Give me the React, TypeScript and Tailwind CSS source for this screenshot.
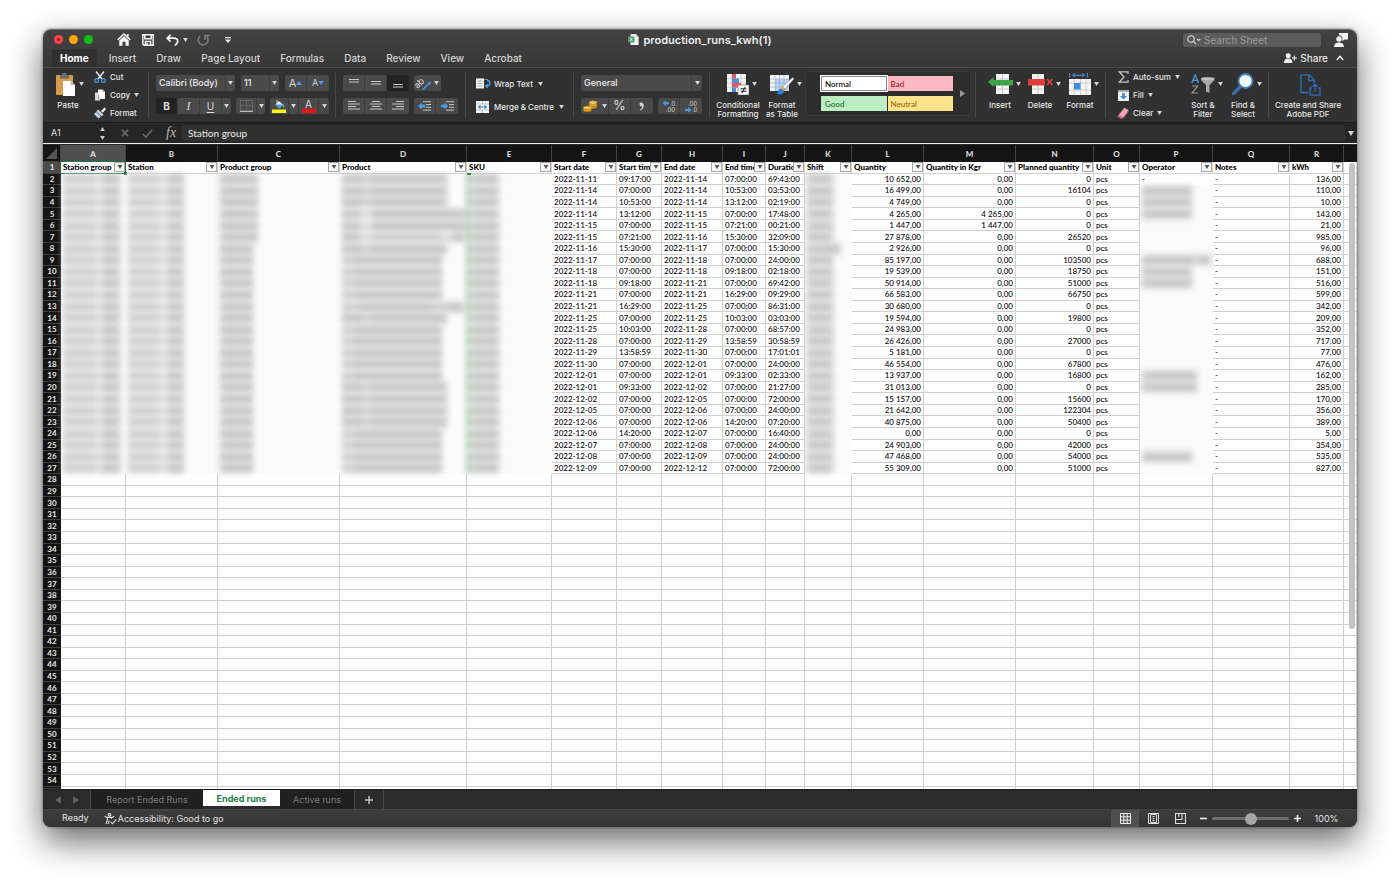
import React from "react";

type Run = [string, string, string, string, string, string, string, string, string];

const runs: Run[] = [
  ["2022-11-11", "09:17:00", "2022-11-14", "07:00:00", "69:43:00", "10 652,00", "0,00", "0", "136,00"],
  ["2022-11-14", "07:00:00", "2022-11-14", "10:53:00", "03:53:00", "16 499,00", "0,00", "16104", "110,00"],
  ["2022-11-14", "10:53:00", "2022-11-14", "13:12:00", "02:19:00", "4 749,00", "0,00", "0", "10,00"],
  ["2022-11-14", "13:12:00", "2022-11-15", "07:00:00", "17:48:00", "4 265,00", "4 265,00", "0", "143,00"],
  ["2022-11-15", "07:00:00", "2022-11-15", "07:21:00", "00:21:00", "1 447,00", "1 447,00", "0", "21,00"],
  ["2022-11-15", "07:21:00", "2022-11-16", "15:30:00", "32:09:00", "27 878,00", "0,00", "26520", "985,00"],
  ["2022-11-16", "15:30:00", "2022-11-17", "07:00:00", "15:30:00", "2 926,00", "0,00", "0", "96,00"],
  ["2022-11-17", "07:00:00", "2022-11-18", "07:00:00", "24:00:00", "85 197,00", "0,00", "103500", "688,00"],
  ["2022-11-18", "07:00:00", "2022-11-18", "09:18:00", "02:18:00", "19 539,00", "0,00", "18750", "151,00"],
  ["2022-11-18", "09:18:00", "2022-11-21", "07:00:00", "69:42:00", "50 914,00", "0,00", "51000", "516,00"],
  ["2022-11-21", "07:00:00", "2022-11-21", "16:29:00", "09:29:00", "66 583,00", "0,00", "66750", "599,00"],
  ["2022-11-21", "16:29:00", "2022-11-25", "07:00:00", "86:31:00", "30 680,00", "0,00", "0", "342,00"],
  ["2022-11-25", "07:00:00", "2022-11-25", "10:03:00", "03:03:00", "19 594,00", "0,00", "19800", "209,00"],
  ["2022-11-25", "10:03:00", "2022-11-28", "07:00:00", "68:57:00", "24 983,00", "0,00", "0", "352,00"],
  ["2022-11-28", "07:00:00", "2022-11-29", "13:58:59", "30:58:59", "26 426,00", "0,00", "27000", "717,00"],
  ["2022-11-29", "13:58:59", "2022-11-30", "07:00:00", "17:01:01", "5 181,00", "0,00", "0", "77,00"],
  ["2022-11-30", "07:00:00", "2022-12-01", "07:00:00", "24:00:00", "46 554,00", "0,00", "67800", "476,00"],
  ["2022-12-01", "07:00:00", "2022-12-01", "09:33:00", "02:33:00", "13 937,00", "0,00", "16800", "162,00"],
  ["2022-12-01", "09:33:00", "2022-12-02", "07:00:00", "21:27:00", "31 013,00", "0,00", "0", "285,00"],
  ["2022-12-02", "07:00:00", "2022-12-05", "07:00:00", "72:00:00", "15 157,00", "0,00", "15600", "170,00"],
  ["2022-12-05", "07:00:00", "2022-12-06", "07:00:00", "24:00:00", "21 642,00", "0,00", "122304", "356,00"],
  ["2022-12-06", "07:00:00", "2022-12-06", "14:20:00", "07:20:00", "40 875,00", "0,00", "50400", "389,00"],
  ["2022-12-06", "14:20:00", "2022-12-07", "07:00:00", "16:40:00", "0,00", "0,00", "0", "5,00"],
  ["2022-12-07", "07:00:00", "2022-12-08", "07:00:00", "24:00:00", "24 903,00", "0,00", "42000", "354,00"],
  ["2022-12-08", "07:00:00", "2022-12-09", "07:00:00", "24:00:00", "47 468,00", "0,00", "54000", "535,00"],
  ["2022-12-09", "07:00:00", "2022-12-12", "07:00:00", "72:00:00", "55 309,00", "0,00", "51000", "827,00"],
];

const columns: { id: string; title: string; width: string }[] = [
  { id: "A", title: "Station group", width: "w-[65px]" },
  { id: "B", title: "Station", width: "w-[92px]" },
  { id: "C", title: "Product group", width: "w-[122px]" },
  { id: "D", title: "Product", width: "w-[127px]" },
  { id: "E", title: "SKU", width: "w-[85px]" },
  { id: "F", title: "Start date", width: "w-[65px]" },
  { id: "G", title: "Start time", width: "w-[45px]" },
  { id: "H", title: "End date", width: "w-[61px]" },
  { id: "I", title: "End time", width: "w-[43px]" },
  { id: "J", title: "Duration", width: "w-[39px]" },
  { id: "K", title: "Shift", width: "w-[47px]" },
  { id: "L", title: "Quantity", width: "w-[72px]" },
  { id: "M", title: "Quantity in Kgr", width: "w-[92px]" },
  { id: "N", title: "Planned quantity", width: "w-[78px]" },
  { id: "O", title: "Unit", width: "w-[46px]" },
  { id: "P", title: "Operator", width: "w-[73px]" },
  { id: "Q", title: "Notes", width: "w-[77px]" },
  { id: "R", title: "kWh", width: "w-[54px]" },
];

const D = "bg-[#c6c6c6]";
const M = "bg-[#cfcfcf]";
const L = "bg-[#dedede]";

type Segment = [number, string];

function redacted(id: string, row: number): Segment[] {
  switch (id) {
    case "A":
      return [[32, M], [7, L], [18, D]];
    case "B":
      return [[30, M], [10, L], [16, D]];
    case "C":
      return row <= 7 ? [[38, D]] : [[33, D]];
    case "D":
      if (row === 5 || row === 6) return [[18, D], [12, L], [70, D], [24, D]];
      if (row === 7) return [[18, D], [12, L], [70, M], [10, L], [13, D]];
      if (row === 13) return [[18, M], [72, D], [18, M], [14, D]];
      if (row <= 8 || row === 14 || (row >= 20 && row <= 23)) return [[20, D], [9, M], [76, D]];
      return [[12, M], [88, D]];
    case "E":
      return [[27, D]];
    case "K":
      return row === 8 ? [[34, D]] : [[26, D]];
    case "P":
      if ([3, 4, 5, 10, 11, 26].includes(row)) return [[50, D]];
      if (row === 9) return [[52, D], [4, L], [13, D]];
      if (row === 19 || row === 20) return [[55, D]];
      return [];
    default:
      return [];
  }
}

function Caret({ className = "" }: { className?: string }) {
  return (
    <svg viewBox="0 0 6 5" className={`h-[4px] w-[5px] shrink-0 fill-[#d6d6d6] ${className}`}>
      <path d="M0 0h6L3 5z" />
    </svg>
  );
}

function Divider() {
  return <div className="my-1 w-px shrink-0 bg-[#484848]" />;
}

function HiddenCell({ id, row }: { id: string; row: number }) {
  const segs = redacted(id, row);
  return (
    <td className="bg-[#fbfbfb] p-0">
      <div className={`flex h-[10px] pl-[2px] blur-[3px] ${id === "E" ? "border-l-3 border-[#6fae73] pl-0" : ""}`}>
        {segs.map(([w, c], i) => (
          <span key={i} className={`block h-[10px] ${c}`} style={{ width: w }} />
        ))}
      </div>
    </td>
  );
}

const cellBase = "overflow-hidden whitespace-nowrap border-b border-r border-[#cfcfcf] px-[2px] py-0";

function Cell({ children, right }: { children?: React.ReactNode; right?: boolean }) {
  return <td className={`${cellBase} ${right ? "text-right" : "text-left"}`}>{children}</td>;
}

function RowHead({ n, active }: { n?: number; active?: boolean }) {
  return (
    <th
      scope="row"
      className={`border-b border-[#3f3f3f] p-0 text-center font-bold text-[#e8e8e8] ${active ? "bg-[#4c4c4c]" : "bg-[#141414]"}`}
    >
      {n}
    </th>
  );
}

function Sheet() {
  const blanks = Array.from({ length: 27 }, (_, i) => i + 28);
  return (
    <div className="relative min-h-0 flex-1 overflow-hidden bg-white">
      <table className="h-full w-full table-fixed border-separate border-spacing-0 font-['Lato','Open_Sans',sans-serif] text-[8px] leading-[10px] font-medium text-[#080808]">
        <colgroup>
          <col className="w-[18px]" />
          {columns.map((c) => (
            <col key={c.id} className={c.width} />
          ))}
          <col />
        </colgroup>
        <thead>
          <tr className="h-[17px]">
            <th className="border-r border-b border-[#444] bg-[#141414] p-0">
              <svg viewBox="0 0 17 16" className="block h-4 w-full">
                <path d="M14 3v11H3z" fill="#555" />
              </svg>
            </th>
            {columns.map((c) => (
              <th
                key={c.id}
                scope="col"
                className={`border-r border-[#444] p-0 text-center font-bold text-[#e8e8e8] ${c.id === "A" ? "bg-[#505050]" : "bg-[#141414]"}`}
              >
                {c.id}
              </th>
            ))}
            <th className="bg-[#141414]" />
          </tr>
        </thead>
        <tbody>
          <tr>
            <RowHead n={1} active />
            {columns.map((c) => (
              <td key={c.id} className="relative border-r border-b border-[#cfcfcf] p-0 font-black text-black">
                <div className="flex items-center">
                  <span className="min-w-0 flex-1 overflow-hidden pl-[2px] whitespace-nowrap">{c.title}</span>
                  <button
                    aria-label={`Filter ${c.title}`}
                    className="flex h-[10px] w-[11px] shrink-0 items-center justify-center border border-[#a9a9a9] bg-[#f6f6f6]"
                  >
                    <svg viewBox="0 0 6 5" className="h-[4px] w-[6px] fill-[#555]">
                      <path d="M0 0h6L3 5z" />
                    </svg>
                  </button>
                </div>
                {c.id === "A" && (
                  <div className="pointer-events-none absolute -inset-px border border-[#1d7044]">
                    <span className="absolute -right-[2px] -bottom-[2px] h-[3px] w-[3px] bg-[#1d7044]" />
                  </div>
                )}
                {c.id === "E" && <span className="absolute -bottom-[2px] left-0 h-[2px] w-[4px] bg-[#157a2a]" />}
              </td>
            ))}
            <Cell />
          </tr>
          {runs.map((r, i) => {
            const row = i + 2;
            return (
              <tr key={row}>
                <RowHead n={row} />
                {["A", "B", "C", "D", "E"].map((id) => (
                  <HiddenCell key={id} id={id} row={row} />
                ))}
                <Cell>{r[0]}</Cell>
                <Cell>{r[1]}</Cell>
                <Cell>{r[2]}</Cell>
                <Cell>{r[3]}</Cell>
                <Cell>{r[4]}</Cell>
                <HiddenCell id="K" row={row} />
                <Cell right>{r[5]}</Cell>
                <Cell right>{r[6]}</Cell>
                <Cell right>{r[7]}</Cell>
                <Cell>pcs</Cell>
                {row === 2 ? <td className="px-[2px] py-0">-</td> : <HiddenCell id="P" row={row} />}
                <Cell>-</Cell>
                <Cell right>{r[8]}</Cell>
                <Cell />
              </tr>
            );
          })}
          {blanks.map((n) => (
            <tr key={n}>
              <RowHead n={n} />
              {columns.map((c) => (
                <Cell key={c.id} />
              ))}
              <Cell />
            </tr>
          ))}
          <tr className="h-[2px]">
            <RowHead />
            {columns.map((c) => (
              <td key={c.id} className="border-r border-[#cfcfcf] p-0" />
            ))}
            <td className="p-0" />
          </tr>
        </tbody>
      </table>
      <div className="absolute top-[18px] right-[2px] h-[466px] w-[6px] rounded-full bg-[#c3c3c3]" />
    </div>
  );
}

function TitleBar() {
  return (
    <div className="relative flex h-[19px] shrink-0 items-center pl-[11px]">
      <div className="flex gap-[6px]">
        <button aria-label="Close" className="flex h-[9px] w-[9px] items-center justify-center rounded-full bg-[#f9464a]">
          <span className="h-[3px] w-[3px] rounded-full bg-[#8d1214]" />
        </button>
        <button aria-label="Minimise" className="h-[9px] w-[9px] rounded-full bg-[#fda509]" />
        <button aria-label="Zoom" className="h-[9px] w-[9px] rounded-full bg-[#0fc01b]" />
      </div>
      <div className="ml-[24px] flex items-center">
        <button aria-label="Home" className="w-[14px]">
          <svg viewBox="0 0 14 13" className="block h-[13px] w-[14px]" fill="#f4f4f4">
            <path d="M7 0 13.800 6.300l-1 1.200L7 2.200 1.200 7.500l-1-1.200z" />
            <path d="M10 1h1.700v3L10 2.600zM2.200 7.600 7 3.200l4.800 4.400V12.800H8.500V8.800h-3v4H2.200z" />
          </svg>
        </button>
        <button aria-label="Save" className="ml-[11px]">
          <svg viewBox="0 0 12 12" className="block h-3 w-3" fill="none" stroke="#f4f4f4" strokeWidth="1.500">
            <path d="M.8.8h10.400v10.400H2L.8 10z" />
            <path d="M2.800 1v3.800h6.400V1M3.400 11V7.600h5.200V11M5.200 9v2" />
          </svg>
        </button>
        <button aria-label="Undo" className="ml-[12px] flex items-center">
          <svg viewBox="0 0 13 12" className="h-3 w-[13px]" fill="none" stroke="#f4f4f4" strokeWidth="1.700">
            <path d="M4.600.8 1.200 4.200l3.400 3.400M1.400 4.200h6.200c5.400 0 5.200 5 1.200 7.200" />
          </svg>
          <Caret className="ml-[4px]" />
        </button>
        <button aria-label="Redo" className="ml-[9px]">
          <svg viewBox="0 0 13 12" className="h-3 w-[13px]" fill="none" stroke="#7c7c7c" strokeWidth="1.500">
            <path d="M3 2.200a4.900 4.900 0 1 0 6.800.4M8 6V1.600h4.400" />
          </svg>
        </button>
        <button aria-label="Customise toolbar" className="ml-[15px]">
          <svg viewBox="0 0 6 6" className="h-[6px] w-[6px]" fill="#eee">
            <path d="M0 0h6v1.200H0zM0 2.600h6L3 6z" />
          </svg>
        </button>
      </div>
      <div className="pointer-events-none absolute inset-0 flex items-center justify-center gap-[4px]">
        <svg viewBox="0 0 11 11" className="h-[11px] w-[11px]">
          <path d="M2.500 0h5.300L10.600 3v8H2.500z" fill="#f2f5f3" />
          <path d="M7.800 0 10.600 3H7.800z" fill="#b9c9c0" />
          <path d="M0 2.400h6.400v6.200H0z" fill="#4f9c74" />
          <path d="m2 4 2.400 3M4.400 4 2 7" stroke="#e4f3ea" strokeWidth=".9" />
        </svg>
        <h1 className="text-[11px] leading-4 font-semibold text-[#ececec]">production_runs_kwh(1)</h1>
      </div>
      <div className="relative ml-auto flex items-center gap-[13px] pr-[9px]">
        <label className="flex h-[14px] w-[138px] items-center rounded-[2px] bg-[#5b5b5b] pl-[4px]">
          <svg viewBox="0 0 14 10" className="h-[10px] w-[14px] shrink-0" fill="none" stroke="#dcdcdc" strokeWidth="1.100">
            <circle cx="4" cy="4" r="3.200" />
            <path d="m6.400 6.400 2.800 2.800M10 3.800l1.700 1.600 1.700-1.600" />
          </svg>
          <input
            aria-label="Search Sheet"
            placeholder="Search Sheet"
            className="ml-[3px] w-0 min-w-0 flex-1 bg-transparent text-[10px] leading-[14px] text-white outline-none placeholder:text-[#9b9b9b]"
          />
        </label>
        <button aria-label="Feedback">
          <svg viewBox="0 0 14 14" className="block h-[14px] w-[14px]" fill="#f5f5f5">
            <path d="M5 0h9v6.400h-3.400L8.400 8.200V6.600A3.400 3.400 0 0 0 5 2.200z" />
            <circle cx="5" cy="6" r="2.700" />
            <path d="M0 14c.2-3.200 2-4.600 5-4.600s4.800 1.400 5 4.600z" />
          </svg>
        </button>
      </div>
    </div>
  );
}

function MenuTabs() {
  const items = ["Insert", "Draw", "Page Layout", "Formulas", "Data", "Review", "View", "Acrobat"];
  return (
    <nav className="flex h-[18px] shrink-0 items-stretch gap-1 pl-[9px] text-[10px] leading-[17px] font-medium text-[#d4d4d4]">
      <button className="rounded-t-[2px] bg-[#313131] px-2 font-bold text-white">Home</button>
      {items.map((t) => (
        <button key={t} className="px-2">
          {t}
        </button>
      ))}
      <div className="ml-auto flex items-center gap-[8px] pr-[13px] text-[10px]">
        <button className="flex items-center gap-[3px] text-[#e6e6e6]">
          <svg viewBox="0 0 13 10" className="h-[10px] w-[13px]" fill="#efefef">
            <circle cx="4.200" cy="2.800" r="2.500" />
            <path d="M0 10c.1-3.200 1.400-4.400 4.200-4.400S8.300 6.800 8.400 10z" />
            <path d="M9.800 2.400h1.200v2h2v1.200h-2v2H9.800v-2h-2V4.400h2z" />
          </svg>
          Share
        </button>
        <button aria-label="Collapse ribbon">
          <svg viewBox="0 0 8 6" className="h-[6px] w-[8px]" fill="none" stroke="#ececec" strokeWidth="1.500">
            <path d="m.8 5 3.200-3.600L7.200 5" />
          </svg>
        </button>
      </div>
    </nav>
  );
}

const box = "flex h-4 items-stretch overflow-hidden rounded-[2px] bg-[#4a4a4a]";
const seg = "flex items-center justify-center border-r border-[#3c3c3c] last:border-r-0";

function Picker({ label, value, className, caret }: { label: string; value: string; className: string; caret: string }) {
  return (
    <div className={`${box} relative ${className}`}>
      <select
        aria-label={label}
        className="w-full appearance-none bg-transparent pl-[3px] text-[9px] leading-4 font-medium text-[#ededed] outline-none"
      >
        <option>{value}</option>
      </select>
      <span className={`pointer-events-none absolute inset-y-0 right-0 flex items-center justify-center border-l border-[#3c3c3c] ${caret}`}>
        <Caret />
      </span>
    </div>
  );
}

function Lines({ rows, y = 0 }: { rows: [number, number][]; y?: number }) {
  return (
    <svg viewBox="0 0 12 12" className="h-3 w-3" stroke="#c9c9c9" strokeWidth="1">
      {rows.map(([a, b], i) => (
        <path key={i} d={`M${a} ${y + 1.5 + i * 2.5}H${b}`} />
      ))}
    </svg>
  );
}

function Indent() {
  return (
    <svg viewBox="0 0 13 10" className="h-[10px] w-[13px]">
      <path d="M5 .7h8M8 3.500h5M8 6.300h5M5 9.100h8" stroke="#c9c9c9" strokeWidth="1" />
      <path d="M0 5 3.800 1.400v2.100h3.400v3H3.800v2.100z" fill="#4c9be8" />
    </svg>
  );
}

function BigButton({ lines, icon, caret = true, className }: { lines: string[]; icon: React.ReactNode; caret?: boolean; className: string }) {
  return (
    <button className={`flex shrink-0 flex-col items-center text-[8px] leading-[9px] font-medium text-[#e6e6e6] ${className}`}>
      <span className={`flex h-[26px] items-center gap-[3px] ${caret ? "pl-2" : ""}`}>
        {icon}
        {caret && <Caret />}
      </span>
      <span className="mt-[4px] block whitespace-nowrap">
        {lines.map((l) => (
          <span key={l} className="block">
            {l}
          </span>
        ))}
      </span>
    </button>
  );
}

function SmallButton({ text, icon, caret }: { text: string; icon: React.ReactNode; caret?: boolean }) {
  return (
    <button className="flex h-[14px] items-center gap-[4px] text-[8px] leading-[14px] font-medium whitespace-nowrap text-[#e6e6e6]">
      <span className="flex w-3 justify-center">{icon}</span>
      {text}
      {caret && <Caret />}
    </button>
  );
}

function Ribbon() {
  return (
    <div className="flex h-[55px] shrink-0 items-stretch overflow-hidden border-t border-[#4b4b4b] bg-[#313131]">
      <div className="flex w-[105px] shrink-0 pt-[2px] pl-[11px]">
        <BigButton
          className="w-[28px] pt-px"
          lines={["Paste"]}
          icon={
            <svg viewBox="0 0 20 23" className="-ml-1 h-[23px] w-[20px] shrink-0">
              <rect x="0" y="2" width="17" height="20" rx="1" fill="#d79b4e" />
              <path d="M4 2h2a2.500 2.500 0 0 1 5 0h2v3.500H4z" fill="#6d6d6d" />
              <path d="M7 8h7.500L19 12v11H7z" fill="#fff" />
              <path d="M14.500 8v4H19z" fill="#bdbdbd" />
            </svg>
          }
        />
        <div className="ml-[12px] flex flex-col gap-[4px]">
          <SmallButton
            text="Cut"
            icon={
              <svg viewBox="0 0 12 12" className="h-3 w-3 shrink-0" fill="none">
                <path d="M2 .5 8 8M10 .5 4 8" stroke="#eee" strokeWidth="1.400" />
                <circle cx="2.600" cy="9.500" r="1.900" stroke="#4c9be8" strokeWidth="1.200" />
                <circle cx="9.400" cy="9.500" r="1.900" stroke="#4c9be8" strokeWidth="1.200" />
              </svg>
            }
          />
          <SmallButton
            text="Copy"
            caret
            icon={
              <svg viewBox="0 0 12 12" className="h-3 w-3 shrink-0">
                <path d="M1 3.500h5v8H1z" fill="#d7d7d7" />
                <path d="M4 .5h4.500L11 3v7H4z" fill="#fff" />
                <path d="M8.500.5V3H11zM4 4v6H6" fill="#aaa" />
              </svg>
            }
          />
          <SmallButton
            text="Format"
            icon={
              <svg viewBox="0 0 12 12" className="h-3 w-3 shrink-0">
                <path d="m7 4 3.500-3.500 1.500 1.500L8.800 5.800z" fill="#f2f2f2" />
                <path d="m4 2.500 5.500 5L7.800 9.300 2.500 4.200z" fill="#d4d4d4" />
                <path d="M2.600 4.600 7.200 9 4.500 11.800 0 7z" fill="#8bbdec" />
                <path d="M1 6.500 5.500 10.500" stroke="#fff" />
              </svg>
            }
          />
        </div>
      </div>
      <Divider />

      <div className="flex w-[186px] shrink-0 flex-col gap-[7px] pt-[7px] pl-[7px]">
        <div className="flex gap-[6px]">
          <Picker label="Font" value="Calibri (Body)" className="w-[79px]" caret="w-[10px]" />
          <Picker label="Font size" value="11" className="w-[38px]" caret="w-[10px]" />
          <div className={`${box} w-[44px] text-[#d8d8d8]`}>
            <button aria-label="Increase font size" className={`${seg} w-[22px] text-[11px]`}>
              A
              <svg viewBox="0 0 6 4" className="h-[4px] w-[6px] fill-[#4c9be8]">
                <path d="M0 4h6L3 0z" />
              </svg>
            </button>
            <button aria-label="Decrease font size" className={`${seg} w-[22px] text-[9px]`}>
              A
              <svg viewBox="0 0 6 4" className="h-[4px] w-[6px] fill-[#4c9be8]">
                <path d="M0 0h6L3 4z" />
              </svg>
            </button>
          </div>
        </div>
        <div className="flex gap-[5px] text-[10px] text-[#dedede]">
          <div className={`${box} w-[75px]`}>
            <button className={`${seg} w-[22px] bg-[#232323] font-bold`}>B</button>
            <button className={`${seg} w-[22px] font-['Liberation_Serif',serif] text-[12px] italic`}>I</button>
            <button className={`${seg} w-[22px] underline underline-offset-2`}>U</button>
            <button aria-label="Underline options" className={`${seg} flex-1`}>
              <Caret />
            </button>
          </div>
          <div className={`${box} w-[29px]`}>
            <button aria-label="Borders" className={`${seg} w-[21px]`}>
              <svg viewBox="0 0 13 12" className="h-3 w-[13px]" fill="none" stroke="#8d8d8d" strokeWidth=".8">
                <path d="M.5.500h12v10.500M.5.500V11M6.500.500V11M.5 5.500h12" strokeDasharray="1 1" />
                <path d="M0 11.300h13" stroke="#d5d5d5" strokeWidth="1" />
              </svg>
            </button>
            <button aria-label="Border options" className={`${seg} flex-1`}>
              <Caret />
            </button>
          </div>
          <div className={`${box} w-[59px]`}>
            <button aria-label="Fill colour" className={`${seg} w-[19px]`}>
              <svg viewBox="0 0 14 14" className="h-[14px] w-[14px]">
                <path d="M3.500 5.500 7 2l4 3.800L7.300 9.200z" fill="#f0f0f0" />
                <path d="M5 1v4" stroke="#ccc" />
                <path d="M11 4.500c1.800 1.500 1.800 3.500.8 4.500-1-.6-1-2.600-.8-4.500zM3.500 5.500h7.300L7.300 9.200z" fill="#4c9be8" />
                <path d="M0 10.400h14V14H0z" fill="#f7f312" />
              </svg>
            </button>
            <button aria-label="Fill colour options" className={`${seg} w-[10px]`}>
              <Caret />
            </button>
            <button aria-label="Font colour" className={`${seg} w-[20px] flex-col`}>
              <span className="text-[10px] leading-[10px]">A</span>
              <span className="h-[4px] w-[14px] bg-[#ee1111]" />
            </button>
            <button aria-label="Font colour options" className={`${seg} flex-1`}>
              <Caret />
            </button>
          </div>
        </div>
      </div>
      <Divider />

      <div className="flex w-[129px] shrink-0 flex-col gap-[7px] pt-[7px] pl-[7px]">
        <div className="flex gap-[5px]">
          <div className={`${box} w-[66px]`}>
            <button aria-label="Align top" className={`${seg} w-[22px]`}>
              <Lines rows={[[1, 11], [1, 11]]} y={1} />
            </button>
            <button aria-label="Align middle" className={`${seg} w-[22px]`}>
              <Lines rows={[[1, 11], [1, 11]]} y={3} />
            </button>
            <button aria-label="Align bottom" className={`${seg} w-[22px] bg-[#232323]`}>
              <Lines rows={[[1, 11], [1, 11]]} y={6} />
            </button>
          </div>
          <button aria-label="Orientation" className="flex h-4 w-[27px] items-center justify-center gap-[2px] rounded-[2px] bg-[#4a4a4a]">
            <svg viewBox="0 0 15 15" className="h-[15px] w-[15px] shrink-0 overflow-visible">
              <text x="-2" y="9" transform="rotate(-45 4 8)" fontSize="9" fill="#dcdcdc">
                ab
              </text>
              <path d="M5.500 13.800 12 7.500" stroke="#4c9be8" strokeWidth="1.200" />
              <path d="m14 5.500-3.600 1 2.600 2.600z" fill="#4c9be8" />
            </svg>
            <Caret />
          </button>
        </div>
        <div className="flex gap-[5px]">
          <div className={`${box} w-[66px]`}>
            <button aria-label="Align left" className={`${seg} w-[22px]`}>
              <Lines rows={[[0, 8], [0, 12], [0, 8], [0, 12]]} />
            </button>
            <button aria-label="Centre" className={`${seg} w-[22px]`}>
              <Lines rows={[[2, 10], [0, 12], [2, 10], [0, 12]]} />
            </button>
            <button aria-label="Align right" className={`${seg} w-[22px]`}>
              <Lines rows={[[4, 12], [0, 12], [4, 12], [0, 12]]} />
            </button>
          </div>
          <div className={`${box} w-[44px]`}>
            <button aria-label="Decrease indent" className={`${seg} w-[22px]`}>
              <Indent />
            </button>
            <button aria-label="Increase indent" className={`${seg} w-[22px]`}>
              <svg viewBox="0 0 13 10" className="h-[10px] w-[13px]">
                <path d="M5 .7h8M8 3.500h5M8 6.300h5M5 9.100h8" stroke="#c9c9c9" strokeWidth="1" />
                <path d="M7.200 5 3.400 1.400v2.100H0v3h3.400v2.100z" fill="#4c9be8" />
              </svg>
            </button>
          </div>
        </div>
      </div>
      <Divider />

      <div className="flex w-[107px] shrink-0 flex-col gap-[8px] pt-[8px] pl-[10px] text-[8px] font-medium text-[#e6e6e6]">
        <button className="flex h-[15px] items-center gap-[3px]">
          <svg viewBox="0 0 15 11" className="h-[11px] w-[15px]">
            <path d="M0 .5h8v10H0z" fill="#f5f5f5" />
            <path d="M1.500 3h5M1.500 5.500h5M1.500 8h5M8 1.500h4" stroke="#999" strokeWidth=".8" />
            <path d="M11 2.500c4 0 4 5.500 0 5.500" fill="none" stroke="#4c9be8" strokeWidth="1.400" />
            <path d="m8.500 8 3.200-2.500v5z" fill="#4c9be8" />
          </svg>
          Wrap Text
          <Caret className="ml-[2px]" />
        </button>
        <button className="flex h-[15px] items-center gap-[5px]">
          <svg viewBox="0 0 13 12" className="h-3 w-[13px]">
            <path d="M0 0h13v12H0z" fill="#f5f5f5" />
            <path d="M0 3h13M0 9h13M6.500 0v3M6.500 9v3" stroke="#a9a9a9" strokeWidth=".7" />
            <path d="M1.500 6 4.500 3.800v1.600h4V3.800L11.500 6l-3 2.200V6.600h-4v1.600z" fill="#3d88d8" />
          </svg>
          Merge &amp; Centre
          <Caret />
        </button>
      </div>
      <Divider />

      <div className="flex w-[135px] shrink-0 flex-col gap-[7px] pt-[7px] pl-[7px]">
        <Picker label="Number format" value="General" className="w-[121px]" caret="w-[11px]" />
        <div className="flex gap-[5px] text-[#dedede]">
          <div className={`${box} w-[72px]`}>
            <button aria-label="Currency" className={`${seg} w-[28px] gap-[5px]`}>
              <svg viewBox="0 0 14 12" className="h-3 w-[14px]" stroke="#a3700f" strokeWidth=".5">
                <ellipse cx="10" cy="6.600" rx="4" ry="1.800" fill="#d99b22" />
                <ellipse cx="10" cy="4.800" rx="4" ry="1.800" fill="#e5ad35" />
                <ellipse cx="10" cy="2.600" rx="4" ry="1.800" fill="#f5c95a" />
                <ellipse cx="4.500" cy="10" rx="4.300" ry="1.800" fill="#d99b22" />
                <ellipse cx="4.500" cy="7.800" rx="4.300" ry="1.800" fill="#f5c95a" />
              </svg>
              <Caret />
            </button>
            <button className={`${seg} w-[22px] text-[13px]`}>%</button>
            <button aria-label="Comma style" className={`${seg} w-[22px]`}>
              <svg viewBox="0 0 6 10" className="h-[9px] w-[6px]" fill="#d9d9d9">
                <path d="M1 .5C5.500 0 7 6 1 9.800L.6 9c2-1.500 2.500-3 2.400-4C.5 5.200-.5 1.200 1 .5z" />
              </svg>
            </button>
          </div>
          <div className={`${box} w-[44px]`}>
            {[0, 1].map((k) => (
              <button key={k} aria-label={k ? "Decrease decimal" : "Increase decimal"} className={`${seg} w-[22px]`}>
                <svg viewBox="0 0 14 13" className="h-[13px] w-[14px]" fontSize="6" fill="#cfcfcf">
                  <text x={k ? 4 : 8} y="5.500">{k ? ".00" : ".0"}</text>
                  <text x={k ? 8 : 4} y="12">{k ? ".0" : ".00"}</text>
                  {k ? (
                    <path d="M7.500 10 4 7.300v1.700H1v2h3v1.700z" fill="#4c9be8" />
                  ) : (
                    <path d="M.5 3.200 4 .5v1.700h3v2H4v1.700z" fill="#4c9be8" />
                  )}
                </svg>
              </button>
            ))}
          </div>
        </div>
      </div>
      <Divider />

      <div className="flex w-[265px] shrink-0 pt-[3px] pl-[4px]">
        <BigButton
          className="w-[48px]"
          lines={["Conditional", "Formatting"]}
          icon={
            <svg viewBox="0 0 22 21" className="h-[21px] w-[22px] shrink-0">
              <path d="M0 0h19v18H0z" fill="#f4f4f4" />
              <path d="M0 4.500h19M0 9h19M0 13.500h19M5 0v18M14 0v18" stroke="#c4c4c4" strokeWidth=".7" />
              <path d="M5 0h4v4.500H5zM5 9h9v4.500H5z" fill="#dd5a5a" />
              <path d="M5 4.500h7V9H5zM5 13.500h4V18H5z" fill="#4d8fd8" />
              <path d="M11 11h11v10H11z" fill="#fff" stroke="#777" strokeWidth=".7" />
              <path d="M13.500 14.800h6M13.500 17.200h6M18.200 12.800l-3.400 6.400" stroke="#222" strokeWidth="1" />
            </svg>
          }
        />
        <BigButton
          className="ml-[1px] w-[38px]"
          lines={["Format", "as Table"]}
          icon={
            <svg viewBox="0 0 24 21" className="h-[21px] w-[24px] shrink-0">
              <path d="M0 1h19v16H0z" fill="#f4f4f4" />
              <path d="M5 5h14v12H5z" fill="#b4d2f0" />
              <path d="M0 5h19M0 9h19M0 13h19M5 1v16M9.500 1v16M14 1v16" stroke="#9db4cb" strokeWidth=".7" />
              <path d="M22.500 3.500 24 5l-9 10-3-2z" fill="#f2f2f2" stroke="#777" strokeWidth=".5" />
              <path d="m12.500 12.500 3.200 2.800-1.700 2-3.500-2.500z" fill="#e0a04a" />
              <path d="M10.800 14.800c-3 0-2 3.500-4.300 4.700 3 2 7.500.8 7.800-2.400z" fill="#2f7fd8" />
            </svg>
          }
        />
        <div className="ml-[4px] flex h-[45px] w-[166px] items-center rounded-[3px] border border-[#3b3b3b] bg-[#2d2d2d] pl-[15px]">
          <div className="grid w-[132px] grid-cols-2 gap-x-px gap-y-[5px] font-['Lato','Open_Sans',sans-serif] text-[8px] leading-[14px] font-medium">
            <button className="h-[15px] border border-[#8a8a8a] bg-white pl-[3px] text-left text-black outline outline-1 outline-white">Normal</button>
            <button className="h-[15px] bg-[#fdb9c3] pl-[3px] text-left text-[#a31621]">Bad</button>
            <button className="h-[15px] bg-[#bdeec3] pl-[4px] text-left text-[#156b1c]">Good</button>
            <button className="h-[15px] bg-[#fde38b] pl-[3px] text-left text-[#94650c]">Neutral</button>
          </div>
          <button aria-label="More styles" className="ml-[7px]">
            <svg viewBox="0 0 5 7" className="h-[7px] w-[5px] fill-[#9a9a9a]">
              <path d="M0 0v7l5-3.500z" />
            </svg>
          </button>
        </div>
      </div>
      <Divider />

      <div className="flex w-[129px] shrink-0 pt-[3px] pl-[4px]">
        <BigButton
          className="w-[40px]"
          lines={["Insert"]}
          icon={
            <svg viewBox="0 0 25 20" className="h-5 w-[25px] shrink-0">
              <path d="M8 0h13v20H8z" fill="#f4f4f4" />
              <path d="M8 5h13M8 15h13M14.500 0v20" stroke="#bcbcbc" strokeWidth=".8" />
              <path d="M0 7.800 5.500 3v3H25v5.500H5.500v1.500z" fill="#3fa648" />
              <path d="M11 6v5.500M18 6v5.500" stroke="#2f8a38" strokeWidth=".6" />
            </svg>
          }
        />
        <BigButton
          className="w-[40px]"
          lines={["Delete"]}
          icon={
            <svg viewBox="0 0 25 20" className="h-5 w-[25px] shrink-0">
              <path d="M4 0h12v20H4z" fill="#f4f4f4" />
              <path d="M4 15h12M10 0v20" stroke="#bcbcbc" strokeWidth=".8" />
              <path d="M0 5h17v6.500H0z" fill="#e03c3c" />
              <path d="m19 5 5.500 6M24.500 5 19 11" stroke="#e03c3c" strokeWidth="1.800" />
            </svg>
          }
        />
        <BigButton
          className="w-[40px]"
          lines={["Format"]}
          icon={
            <svg viewBox="0 0 22 22" className="h-[22px] w-[22px] shrink-0">
              <path d="M.7 0v4.500M18.300 0v4.500M4 2.200h11M6 .4 3.500 2.200 6 4M13 .4l2.500 1.800L13 4" stroke="#4c9be8" strokeWidth="1" fill="none" />
              <path d="M0 6h22v16H0z" fill="#f4f4f4" />
              <path d="M0 10h22M0 17h22M5 6v16M11.500 6v16M17 6v16" stroke="#c4c4c4" strokeWidth=".8" />
              <path d="M5 10h6.500v6.500H5z" fill="#3e8ede" />
            </svg>
          }
        />
      </div>
      <Divider />

      <div className="flex w-[162px] shrink-0 pt-[2px] pl-[11px]">
        <div className="flex w-[66px] flex-col gap-[4px]">
          <SmallButton
            text="Auto-sum"
            caret
            icon={
              <svg viewBox="0 0 11 12" className="h-3 w-[11px] shrink-0" fill="none" stroke="#c4c4c4" strokeWidth="1.300">
                <path d="M10 3V.8H1.200L6 6l-4.800 5.200H10V9" />
              </svg>
            }
          />
          <SmallButton
            text="Fill"
            caret
            icon={
              <svg viewBox="0 0 11 12" className="h-3 w-[11px] shrink-0">
                <path d="M0 1h11v11H0z" fill="#f4f4f4" />
                <path d="M0 1h11v2H0z" fill="#aaa" />
                <path d="M4.200 4h2.600v3H9L5.500 10.600 2 7h2.200z" fill="#3e8ede" />
              </svg>
            }
          />
          <SmallButton
            text="Clear"
            caret
            icon={
              <svg viewBox="0 0 12 12" className="h-3 w-3 shrink-0">
                <path d="m7.500.8 4 2.400L6 10.800 1.500 8.200z" fill="#f7a3b1" />
                <path d="M1.500 8.200 6 10.800 4.600 12 .6 9.800zM11.500 3.200v1.600L6 12v-1.200z" fill="#d9677c" />
              </svg>
            }
          />
        </div>
        <BigButton
          className="w-[40px] pt-px"
          lines={["Sort &", "Filter"]}
          icon={
            <svg viewBox="0 0 24 21" className="h-[21px] w-[24px] shrink-0">
              <path d="M.8 9 4.200.8 7.600 9M2 6.300h4.400" fill="none" stroke="#4c9be8" strokeWidth="1.200" />
              <path d="M1.200 12h5.400L1.200 19h5.800" fill="none" stroke="#9a9a9a" strokeWidth="1.200" />
              <path d="M10 4.500h13.500v1.500L18.500 11v8l-3.500-1.500V11L10 6z" fill="#a9a9a9" />
              <ellipse cx="16.800" cy="4.500" rx="6.700" ry="1.300" fill="#c9c9c9" />
            </svg>
          }
        />
        <BigButton
          className="w-[40px] pt-px"
          lines={["Find &", "Select"]}
          icon={
            <svg viewBox="0 0 22 22" className="h-[22px] w-[22px] shrink-0">
              <path d="M1.500 20.500 8 14" stroke="#3a6ea5" strokeWidth="3.200" strokeLinecap="round" />
              <circle cx="13.500" cy="8" r="7" fill="#f3fafe" stroke="#3f7fbe" strokeWidth="1.800" />
            </svg>
          }
        />
      </div>
      <Divider />

      <div className="flex flex-1 pt-[3px] pl-[2px]">
        <BigButton
          className="w-[74px]"
          caret={false}
          lines={["Create and Share", "Adobe PDF"]}
          icon={
            <svg viewBox="0 0 21 22" className="mt-[2px] ml-[4px] h-[22px] w-[21px]" fill="none" stroke="#2f6fbf" strokeWidth="1.300">
              <path d="M8 18.500H1V.8h8l5.500 5.500v3M8.800.8v5.700h5.700" />
              <path d="M12 14h-2v7.200h10V14h-2M15 17.500v-7M12.600 12.600 15 10.200l2.400 2.400" />
            </svg>
          }
        />
      </div>
    </div>
  );
}

function FormulaBar() {
  return (
    <div className="flex h-[21px] shrink-0 items-stretch border-t border-[#1c1c1c] bg-[#262626]">
      <input
        aria-label="Name box"
        defaultValue="A1"
        className="w-[54px] bg-transparent pl-[8px] text-[9px] text-[#e2e2e2] outline-none"
      />
      <div className="flex w-[12px] flex-col items-center justify-center gap-[5px] border-r border-[#222]">
        <svg viewBox="0 0 6 5" className="h-[4px] w-[5px] fill-[#c8c8c8]">
          <path d="M0 5h6L3 0z" />
        </svg>
        <svg viewBox="0 0 6 5" className="h-[4px] w-[5px] fill-[#c8c8c8]">
          <path d="M0 0h6L3 5z" />
        </svg>
      </div>
      <div className="flex w-[73px] items-center pl-[12px]">
        <button aria-label="Cancel">
          <svg viewBox="0 0 8 8" className="h-2 w-2" stroke="#6d6d6d" strokeWidth="1.500">
            <path d="m.8.8 6.400 6.400M7.200.8.8 7.200" />
          </svg>
        </button>
        <button aria-label="Enter" className="ml-[13px]">
          <svg viewBox="0 0 11 9" className="h-[9px] w-[11px]" fill="none" stroke="#6d6d6d" strokeWidth="1.500">
            <path d="M.8 5 4 8 10.200.8" />
          </svg>
        </button>
        <button className="ml-[13px] font-['Liberation_Serif',serif] text-[14px] leading-4 text-[#b5b5b5] italic">fx</button>
      </div>
      <input
        aria-label="Formula"
        defaultValue="Station group"
        className="my-[2px] min-w-0 flex-1 rounded-[2px] bg-[#313131] pl-[6px] font-['Lato','Open_Sans',sans-serif] text-[10px] text-[#ececec] outline-none"
      />
      <button aria-label="Expand formula bar" className="flex w-[12px] items-center justify-center">
        <svg viewBox="0 0 6 5" className="h-[5px] w-[6px] fill-[#d6d6d6]">
          <path d="M0 0h6L3 5z" />
        </svg>
      </button>
    </div>
  );
}

function SheetTabs() {
  return (
    <div className="flex h-5 shrink-0 items-stretch border-t border-[#1e1e1e] bg-[#2b2b2b] text-[9px] leading-[18px]">
      <div className="flex w-[47px] items-center gap-[12px] pl-[12px]">
        <button aria-label="Previous sheet">
          <svg viewBox="0 0 6 8" className="h-2 w-[6px] fill-[#5f5f5f]">
            <path d="M6 0v8L0 4z" />
          </svg>
        </button>
        <button aria-label="Next sheet">
          <svg viewBox="0 0 6 8" className="h-2 w-[6px] fill-[#5f5f5f]">
            <path d="M0 0v8l6-4z" />
          </svg>
        </button>
      </div>
      <button className="w-[113px] border-l border-[#4a4a4a] bg-[#202020] text-[#7d7d7d]">Report Ended Runs</button>
      <button className="mb-[3px] w-[77px] bg-white font-bold text-[#1b7c4b]">Ended runs</button>
      <button className="w-[75px] border-r border-[#4a4a4a] bg-[#202020] text-[#7d7d7d]">Active runs</button>
      <button aria-label="Add sheet" className="flex w-[29px] items-center justify-center border-r border-[#4a4a4a]">
        <svg viewBox="0 0 8 8" className="h-2 w-2" stroke="#c4c4c4" strokeWidth="1.400">
          <path d="M4 0v8M0 4h8" />
        </svg>
      </button>
    </div>
  );
}

function StatusBar() {
  return (
    <div className="flex h-[18px] shrink-0 items-stretch border-t border-[#464646] bg-linear-to-b from-[#3d3d3d] to-[#343434] text-[9px] leading-[16px] text-[#e2e2e2]">
      <span className="pl-[19px]">Ready</span>
      <button className="ml-[15px] flex items-center gap-[1px]">
        <svg viewBox="0 0 13 12" className="h-3 w-[13px]" fill="none" stroke="#e2e2e2" strokeWidth="1.100">
          <circle cx="5.500" cy="1.800" r="1.300" />
          <path d="M.8 3.200c1 1 2.200 1.200 2.700 1.300v2L2 11M10.200 3.200c-1 1-2.200 1.200-2.700 1.300v1.300M3.500 4.400h4M4 11l1.300-3.500" />
          <path d="m6.500 8.800 2 2 3.800-4.500" />
        </svg>
        Accessibility: Good to go
      </button>
      <div className="ml-auto flex items-stretch">
        <button aria-label="Normal view" className="flex w-[28px] items-center justify-center bg-[#4f4f4f]">
          <svg viewBox="0 0 11 11" className="h-[11px] w-[11px]" fill="none" stroke="#efefef" strokeWidth="1">
            <path d="M.5.500h10v10H.5zM3.800.500v10M7.200.500v10M.5 3.800h10M.5 7.200h10" />
          </svg>
        </button>
        <button aria-label="Page layout view" className="flex w-[28px] items-center justify-center">
          <svg viewBox="0 0 11 11" className="h-[11px] w-[11px]" fill="none" stroke="#dedede" strokeWidth="1">
            <path d="M.5.500h10v10H.5z" />
            <path d="M2.500 1.500h6v8h-6zM4.500 3.500h2M4.500 5.500h2M4.500 7.500h2" />
          </svg>
        </button>
        <button aria-label="Page break view" className="flex w-[27px] items-center justify-center">
          <svg viewBox="0 0 11 11" className="h-[11px] w-[11px]" fill="none" stroke="#dedede" strokeWidth="1.100">
            <path d="M.5.500h10v10H.5zM.5 6.500h6.500V.5M3.800.500v3.500" />
          </svg>
        </button>
        <button aria-label="Zoom out" className="ml-[6px] flex items-center">
          <svg viewBox="0 0 7 7" className="h-[7px] w-[7px]" stroke="#f0f0f0" strokeWidth="1.600">
            <path d="M0 3.500h7" />
          </svg>
        </button>
        <input
          type="range"
          aria-label="Zoom"
          min={0}
          max={200}
          defaultValue={100}
          className="mx-[5px] my-auto h-[3px] w-[77px] appearance-none rounded-full bg-[#6e6e6e] [&::-webkit-slider-thumb]:h-3 [&::-webkit-slider-thumb]:w-3 [&::-webkit-slider-thumb]:appearance-none [&::-webkit-slider-thumb]:rounded-full [&::-webkit-slider-thumb]:bg-[#a6a6a6]"
        />
        <button aria-label="Zoom in" className="flex items-center">
          <svg viewBox="0 0 7 7" className="h-[7px] w-[7px]" stroke="#f0f0f0" strokeWidth="1.600">
            <path d="M0 3.500h7M3.500 0v7" />
          </svg>
        </button>
        <button className="w-[56px] pr-[5px] text-center">100%</button>
      </div>
    </div>
  );
}

export default function App() {
  return (
    <main className="flex h-screen bg-white px-[43px] pt-[29px] pb-[57px] font-['Inter',sans-serif]">
      <div className="flex min-w-0 flex-1 flex-col rounded-[8px] shadow-[0_14px_34px_rgba(0,0,0,0.6),0_0_3px_rgba(0,0,0,0.5)]">
        <div className="flex min-h-0 flex-1 flex-col overflow-hidden rounded-[8px] border-t border-[#6e6e6e] bg-linear-to-b from-[#424242] to-[#363636] to-[40px]">
          <TitleBar />
          <MenuTabs />
          <Ribbon />
          <FormulaBar />
          <div className="h-[2px] shrink-0 border-b border-[#2a2a2a] bg-[#ededed]" />
          <Sheet />
          <SheetTabs />
          <StatusBar />
        </div>
      </div>
    </main>
  );
}
